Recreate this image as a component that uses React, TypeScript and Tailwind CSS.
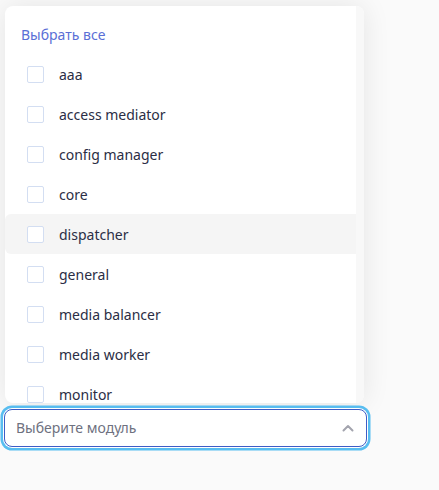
import React from "react";

const items = [
  "aaa",
  "access mediator",
  "config manager",
  "core",
  "dispatcher",
  "general",
  "media balancer",
  "media worker",
  "monitor",
];

export default function App() {
  return (
    <div
      className="w-[439px] h-[490px] bg-[#fafafa] overflow-hidden flex flex-col"
      style={{ fontFamily: '"Noto Sans", "Open Sans", sans-serif' }}
    >
      <div className="ml-[5px] mt-[6px] w-[359px] h-[397px] bg-white rounded-lg shadow-[0_0_28px_rgba(0,0,0,0.09)] overflow-hidden flex">
        <div className="w-[351px] flex flex-col">
          <div className="pl-[16px] pt-[19px] pb-[9px] text-[14px] leading-[20px] text-[#5a6fd6]">
            Выбрать все
          </div>
          {items.map((it) => (
            <div
              key={it}
              className={
                "h-[40px] shrink-0 flex items-center pl-[22px] gap-[15px] rounded-l-md " +
                (it === "dispatcher" ? "bg-[#f5f5f5]" : "")
              }
            >
              <div className="w-[17px] h-[17px] border border-[#d3def2] rounded-[2px] bg-white" />
              <span className="text-[14px] text-[#2b2e45]">{it}</span>
            </div>
          ))}
        </div>
        <div className="w-[8px] bg-[#f8f8f8]" />
      </div>
      <div className="ml-[4px] mt-[6px] w-[363px] h-[38px] rounded-lg border border-[#3d5cc6] bg-white shadow-[0_0_0_1px_#ffffff,0_0_0_3.5px_#58bdf0] flex items-center justify-between pl-[11px] pr-[12px]">
        <span className="text-[14px] leading-[20px] text-[#6e717f] whitespace-nowrap">Выберите модуль</span>
        <svg width="12" height="8" viewBox="0 0 12 8" fill="none">
          <path d="M1.5 6.5 L6 2 L10.5 6.5" stroke="#a3a4ae" strokeWidth="2" strokeLinecap="round" strokeLinejoin="round" />
        </svg>
      </div>
    </div>
  );
}
